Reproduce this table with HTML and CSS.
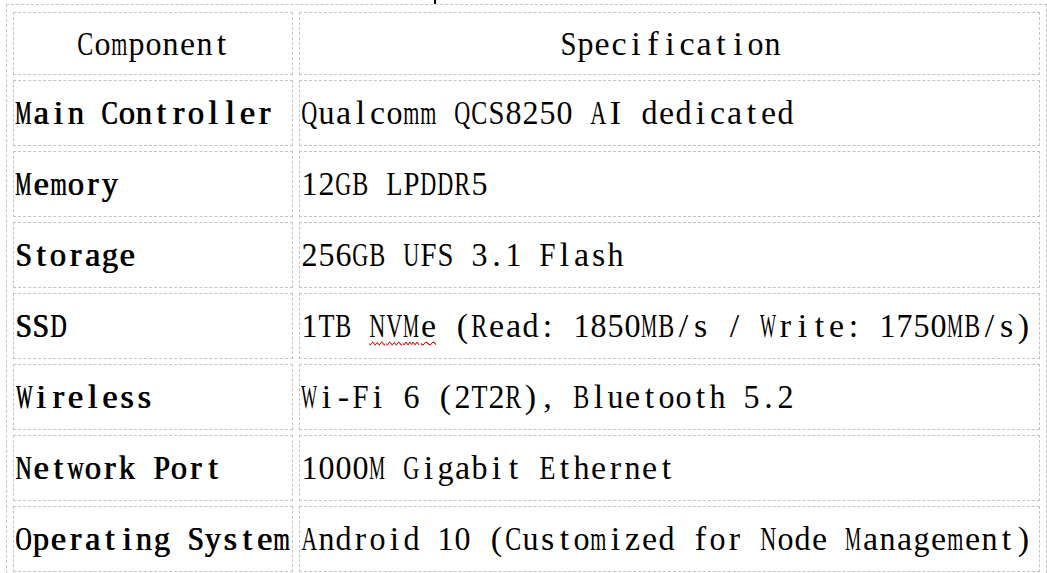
FILE: index.html
```html
<!DOCTYPE html>
<html lang="en">
<head>
<meta charset="utf-8">
<title>Specifications</title>
<link rel="stylesheet" href="styles.css">
</head>
<body>
<div class="caption"><span class="caption-tick"></span></div>
<table class="spec-table">
  <thead>
    <tr>
      <th class="col-name mono">Component</th>
      <th class="col-value mono">Specification</th>
    </tr>
  </thead>
  <tbody>
    <tr><td class="name mono">Main Controller</td><td class="value mono">Qualcomm QCS8250 AI dedicated</td></tr>
    <tr><td class="name mono">Memory</td><td class="value mono">12GB LPDDR5</td></tr>
    <tr><td class="name mono">Storage</td><td class="value mono">256GB UFS 3.1 Flash</td></tr>
    <tr><td class="name mono">SSD</td><td class="value mono">1TB <span class="spell">NVMe</span> (Read: 1850MB/s / Write: 1750MB/s)</td></tr>
    <tr><td class="name mono">Wireless</td><td class="value mono">Wi-Fi 6 (2T2R), Bluetooth 5.2</td></tr>
    <tr><td class="name mono">Network Port</td><td class="value mono">1000M Gigabit Ethernet</td></tr>
    <tr><td class="name mono">Operating System</td><td class="value mono">Android 10 (Customized for Node Management)</td></tr>
  </tbody>
</table>
<script src="script.js"></script>
</body>
</html>
```
FILE: styles.css
```css
html, body {
  margin: 0;
  padding: 0;
  background: #ffffff;
}

body {
  font-family: "Liberation Serif", "DejaVu Serif", serif;
  color: #000;
}

.caption {
  height: 4px;
  overflow: hidden;
}

.caption-tick {
  display: inline-block;
  vertical-align: top;
  margin-left: 434px;
  width: 2px;
  height: 4px;
  background: #000;
}

.spec-table {
  margin-left: 6px;
  border: 1px dashed #c4c4c4;
  border-collapse: separate;
  border-spacing: 6px 5px;
  padding: 2px 0 0 0;
}

.spec-table th,
.spec-table td {
  box-sizing: border-box;
  border: 1px dashed #c4c4c4;
  padding: 0 0 0 1px;
  font-size: 34px;
  white-space: nowrap;
  vertical-align: middle;
  line-height: 40px;
  --pitch: 17px;
}

.spec-table th {
  height: 63px;
  font-weight: normal;
  text-align: center;
}

.spec-table td {
  height: 66px;
  text-align: left;
}

.col-name {
  width: 280px;
}

.col-value {
  width: 741px;
}

.spec-table td.name {
  --pitch: 17.2px;
  text-shadow: 1px 0 0 #000;
}

.ch {
  display: inline-flex;
  justify-content: center;
  width: var(--pitch);
  white-space: pre;
}

.glyph {
  display: inline-block;
  flex-shrink: 0;
  transform-origin: 50% 50%;
}

.spell .ch {
  text-decoration-line: underline;
  text-decoration-style: wavy;
  text-decoration-color: #e00000;
  text-decoration-thickness: 1px;
  text-underline-offset: 4px;
}

.spell .glyph {
  text-decoration-line: underline;
  text-decoration-style: wavy;
  text-decoration-color: #e00000;
  text-decoration-thickness: 1px;
  text-underline-offset: 4px;
}
```
FILE: script.js
```js
(function () {
  function wrap(node) {
    var kids = Array.prototype.slice.call(node.childNodes);
    kids.forEach(function (k) {
      if (k.nodeType === 3) {
        var frag = document.createDocumentFragment();
        var text = k.nodeValue;
        for (var i = 0; i < text.length; i++) {
          var c = document.createElement('span');
          c.className = 'ch';
          var g = document.createElement('span');
          g.className = 'glyph';
          g.textContent = text[i];
          c.appendChild(g);
          frag.appendChild(c);
        }
        node.replaceChild(frag, k);
      } else if (k.nodeType === 1) {
        wrap(k);
      }
    });
  }

  var cells = document.querySelectorAll('.mono');
  cells.forEach(wrap);

  document.querySelectorAll('.ch').forEach(function (c) {
    var g = c.firstChild;
    var pitch = c.getBoundingClientRect().width;
    var w = g.getBoundingClientRect().width;
    var max = pitch - 1;
    if (w > max && w > 0) {
      g.style.transform = 'scaleX(' + (max / w).toFixed(3) + ')';
    }
  });
})();
```
